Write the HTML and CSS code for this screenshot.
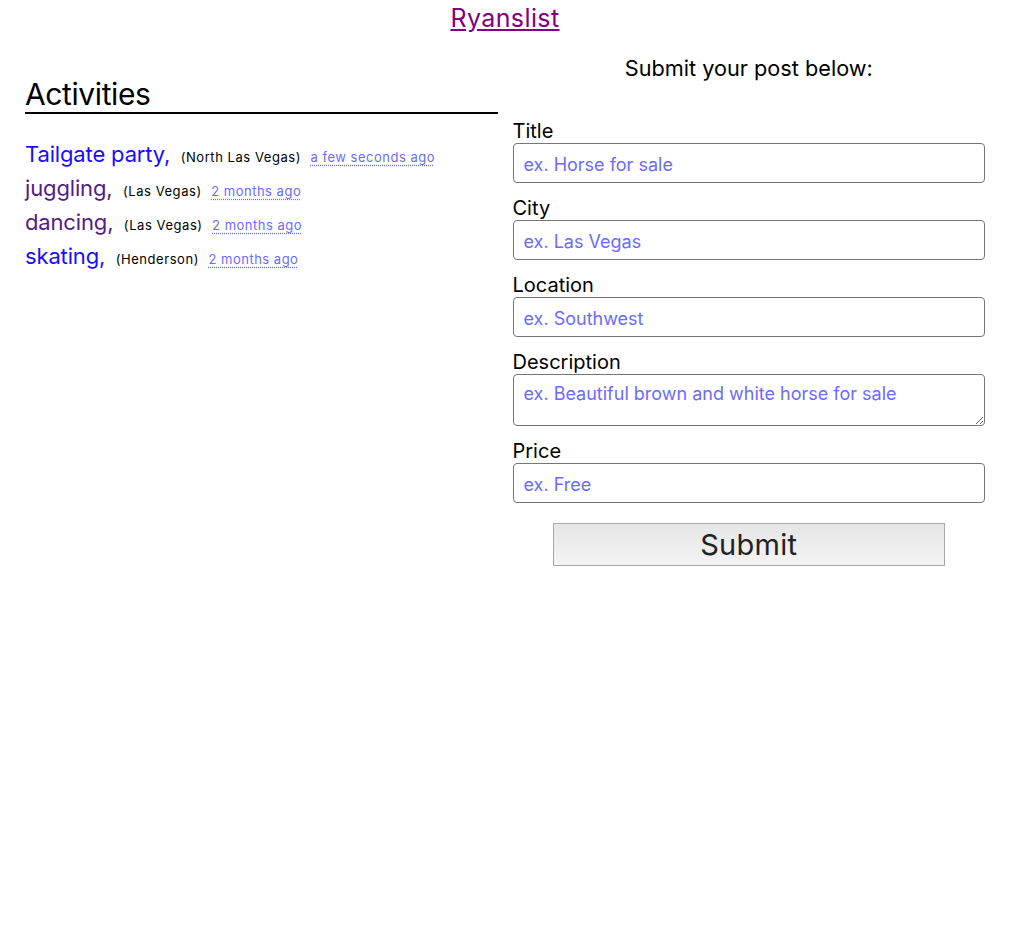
FILE: index.html
```
<!DOCTYPE html>
<html>
<head>
<meta charset="utf-8">
<link rel="stylesheet" href="styles.css">
</head>
<body>
<header class="site-header"><a class="brand" href="#">Ryanslist</a></header>
<main class="layout">
  <section class="activities">
    <h2 class="activities-title">Activities</h2>
    <ul class="post-list">
      <li class="post"><a class="post-name" href="#">Tailgate party,</a> <span class="post-city">(North Las Vegas)</span> <abbr class="post-time">a few seconds ago</abbr></li>
      <li class="post"><a class="post-name visited" href="#">juggling,</a> <span class="post-city">(Las Vegas)</span> <abbr class="post-time">2 months ago</abbr></li>
      <li class="post"><a class="post-name visited" href="#">dancing,</a> <span class="post-city">(Las Vegas)</span> <abbr class="post-time">2 months ago</abbr></li>
      <li class="post"><a class="post-name" href="#">skating,</a> <span class="post-city">(Henderson)</span> <abbr class="post-time">2 months ago</abbr></li>
    </ul>
  </section>
  <section class="submit">
    <h3 class="submit-title">Submit your post below:</h3>
    <form class="post-form">
      <label class="field-label">Title</label>
      <input class="field" type="text" placeholder="ex. Horse for sale">
      <label class="field-label">City</label>
      <input class="field" type="text" placeholder="ex. Las Vegas">
      <label class="field-label">Location</label>
      <input class="field" type="text" placeholder="ex. Southwest">
      <label class="field-label">Description</label>
      <textarea class="field field-area" placeholder="ex. Beautiful brown and white horse for sale"></textarea>
      <label class="field-label">Price</label>
      <input class="field" type="text" placeholder="ex. Free">
      <button class="submit-btn" type="button">Submit</button>
    </form>
  </section>
</main>
</body>
</html>
```
FILE: styles.css
```
* { box-sizing: border-box; }
body {
  margin: 0;
  font-family: Inter, "Liberation Sans", sans-serif;
  color: #000;
  background: #fff;
}
.site-header {
  text-align: center;
  height: 36px;
  line-height: 36px;
  padding-right: 7px;
}
.brand {
  font-size: 25px;
  letter-spacing: 0.4px;
  color: #800080;
  text-decoration: underline;
}
.layout {
  display: flex;
  gap: 15px;
  padding: 0 32px 0 25px;
}
.activities, .submit { flex: 1; min-width: 0; }
.activities-title {
  margin: 40px 0 0;
  font-size: 30px;
  font-weight: 400;
  letter-spacing: -0.4px;
  line-height: 36px;
  border-bottom: 2px solid #000;
}
.post-list {
  list-style: none;
  margin: 23px 0 0;
  padding: 0;
}
.post {
  height: 34px;
  line-height: 34px;
  white-space: nowrap;
}
.post-name {
  font-size: 22px;
  letter-spacing: -0.15px;
  color: #1a0dff;
  text-decoration: none;
}
.post-name.visited { color: #551a8b; }
.post-city {
  font-size: 13px;
  letter-spacing: 0.55px;
  margin-left: 6px;
  margin-right: 5px;
}
.post-time {
  font-size: 13px;
  letter-spacing: 0.5px;
  color: #6b6bff;
  text-decoration: underline dotted;
  text-underline-offset: 3px;
}
.submit-title {
  margin: 18px 0 0;
  font-size: 21.7px;
  font-weight: 400;
  line-height: 28px;
  text-align: center;
}
.post-form {
  display: flex;
  flex-direction: column;
  margin-top: 36px;
}
.field-label {
  font-size: 20px;
  line-height: 24px;
  padding-top: 1px;
  height: 25px;
}
.field {
  height: 40px;
  border: 1px solid #767676;
  border-radius: 4px;
  padding: 2px 10px 0;
  font-family: inherit;
  font-size: 18px;
  margin-bottom: 12px;
}
.field::placeholder { color: #6b6bff; opacity: 1; }
.field-area {
  height: 52px;
  padding-top: 8px;
  resize: vertical;
}
.submit-btn {
  align-self: center;
  width: 392px;
  height: 43px;
  margin-top: 8px;
  font-family: inherit;
  font-size: 29px;
  letter-spacing: 0.3px;
  color: #222;
  border: 1px solid #a9a9a9;
  border-radius: 0;
  background: linear-gradient(#e6e6e6, #f4f4f4);
}
```
